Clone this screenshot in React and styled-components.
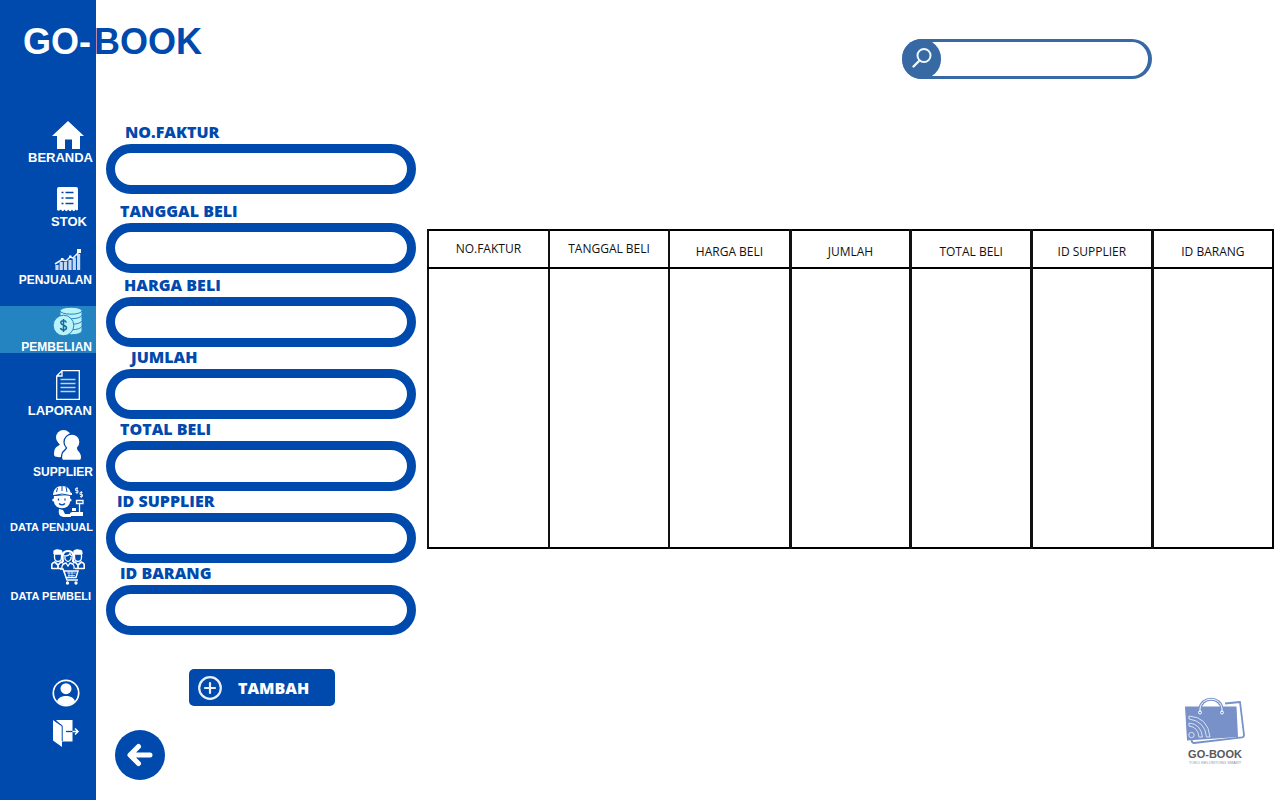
import React from "react";
import styled, { createGlobalStyle } from "styled-components";

const blue = "#004aad";

const GlobalStyle = createGlobalStyle`
  *, *::before, *::after { box-sizing: border-box; }
  body { margin: 0; background: #fff; font-family: "Open Sans", sans-serif; }
`;

const Page = styled.div`
  position: relative;
  display: flex;
  min-height: 100vh;
`;

const Wordmark = styled.h1`
  position: absolute;
  top: 21px;
  left: 23px;
  display: flex;
  gap: 3px;
  margin: 0;
  font: 700 36px/42px "Liberation Sans", sans-serif;
  color: ${blue};
`;

const WordmarkLight = styled.span`
  color: #fff;
`;

const Sidebar = styled.aside`
  flex: 0 0 96px;
  display: flex;
  flex-direction: column;
  padding: 121px 0 52px;
  background: ${blue};
  color: #fff;
`;

const Nav = styled.nav`
  display: flex;
  flex-direction: column;
`;

const NavItem = styled.a`
  display: flex;
  flex-direction: column;
  align-items: flex-end;
  height: ${(p) => p.$height}px;
  margin-top: ${(p) => p.$gap}px;
  overflow: hidden;
  color: #fff;
  text-decoration: none;
  background: ${(p) => (p.$active ? "#2484c2" : "transparent")};
`;

const NavIcon = styled.span`
  flex: 1 0 auto;
  display: flex;
  align-items: flex-start;
  justify-content: center;
  width: 56px;

  svg { display: block; }
`;

const NavLabel = styled.span`
  padding-right: ${(p) => p.$inset}px;
  font: 700 ${(p) => p.$size}px/16px "Liberation Sans", sans-serif;
  white-space: nowrap;
`;

const Account = styled.div`
  display: flex;
  flex-direction: column;
  align-items: center;
  align-self: flex-end;
  gap: 12px;
  width: 60px;
  margin-top: auto;
`;

const IconButton = styled.button`
  display: block;
  padding: 0;
  border: 0;
  background: none;
  color: #fff;
  cursor: pointer;

  svg { display: block; }
`;

const FormColumn = styled.section`
  flex: 0 0 310px;
  display: flex;
  flex-direction: column;
  margin-left: 10px;
  padding: 122px 0 20px;
`;

const Form = styled.form`
  display: flex;
  flex-direction: column;
`;

const Field = styled.div`
  display: flex;
  flex-direction: column;
  margin-bottom: ${(p) => p.$gap}px;
`;

const FieldLabel = styled.label`
  padding-left: ${(p) => p.$indent}px;
  font-size: 16px;
  font-weight: 800;
  line-height: 20px;
  height: 22px;
  color: ${blue};
`;

const FieldInput = styled.input`
  width: 100%;
  height: 50px;
  padding: 0 16px;
  border: 9px solid ${blue};
  border-radius: 25px;
  background: #fff;
  font: 600 16px "Open Sans", sans-serif;
`;

const AddButton = styled.button`
  display: flex;
  align-items: center;
  align-self: flex-start;
  gap: 16px;
  width: 146px;
  height: 37px;
  margin: 34px 0 0 83px;
  padding: 0 9px;
  border: 0;
  border-radius: 5px;
  background: ${blue};
  color: #fff;
  font: 800 16px/20px "Open Sans", sans-serif;
  cursor: pointer;
`;

const BackButton = styled.button`
  display: flex;
  align-items: center;
  justify-content: center;
  width: 50px;
  height: 50px;
  margin: 24px 0 0 9px;
  padding: 0;
  border: 0;
  border-radius: 50%;
  background: ${blue};
  cursor: pointer;
`;

const DataColumn = styled.main`
  flex: 1;
  min-width: 0;
  display: flex;
  flex-direction: column;
  margin-left: 11px;
  padding: 39px 6px 34px 0;
`;

const Search = styled.form`
  display: flex;
  align-items: center;
  align-self: flex-end;
  width: 250px;
  height: 40px;
  margin-right: 122px;
  border: solid #3769a5;
  border-width: 3px 4px 3px 0;
  border-radius: 20px;
`;

const SearchButton = styled.button`
  flex: 0 0 39px;
  height: 40px;
  padding: 0;
  border: 0;
  border-radius: 20px;
  background: #3769a5;
  cursor: pointer;

  svg { display: block; }
`;

const SearchInput = styled.input`
  flex: 1;
  min-width: 0;
  height: 32px;
  padding: 0 8px;
  border: 0;
  border-radius: 0 16px 16px 0;
  background: transparent;
  outline: none;
  font: 14px "Open Sans", sans-serif;
`;

const Table = styled.table`
  width: 100%;
  margin-top: 150px;
  border: 2px solid #000;
  border-collapse: collapse;
  table-layout: fixed;
`;

const HeadCell = styled.th`
  height: 38px;
  padding: ${(p) => (p.$raised ? "0" : "6px 0 0")};
  border-bottom: 2px solid #000;
  border-left: ${(p) => p.$rule}px solid #111;
  font-size: 12px;
  font-weight: 400;
  line-height: 16px;
  color: #111;
  white-space: nowrap;
`;

const BodyCell = styled.td`
  height: 280px;
  padding: 0;
  border-left: ${(p) => p.$rule}px solid #111;
`;

const StoreBadge = styled.footer`
  display: flex;
  flex-direction: column;
  align-items: center;
  align-self: flex-end;
  width: 60px;
  margin: auto 29px 0 0;
`;

const StoreName = styled.strong`
  margin-top: 3px;
  font: 700 11px/12px "Liberation Sans", sans-serif;
  color: #58595b;
  white-space: nowrap;
`;

const StoreTagline = styled.small`
  font: 400 4px/6px "Liberation Sans", sans-serif;
  color: #8794b8;
  white-space: nowrap;
`;

const HomeIcon = () => (
  <svg width="32" height="28" viewBox="0 0 32 28" fill="currentColor">
    <path d="M16 0 32 15h-4v13h-8v-9.500h-7V28H5V15H0z" />
  </svg>
);

const StockIcon = () => (
  <svg width="22" height="25" viewBox="0 0 22 25">
    <path d="M2 0h17Q21 0 21 2v20.500q-1 2-2.500 0-1.700 3.500-3.500 0-1.900 3.500-3.800 0-1.800 3.500-3.700 0-1.800 3.500-3.500 0-2 2-4 .5V2q0-2 2-2z" fill="#fff" />
    <path d="M4.500 5.500h2M4.500 11h2M4.500 16.500h2M8.500 5.500h8M8.500 11h8M8.500 16.500h8" stroke={blue} strokeWidth="1.700" />
  </svg>
);

const SalesIcon = () => (
  <svg width="28" height="22" viewBox="0 0 28 22">
    <path d="M3 21v-5M7.200 21v-8M11.500 21v-8M16 21V11M20.300 21V8.500M24.600 21V5" stroke="#c5d8f2" strokeWidth="3.200" />
    <path d="M1 15 8 10.500l4 1.500 4-4 3 1 6-6" stroke="#f2f7fd" strokeWidth="1.500" fill="none" />
    <path d="M23 0h4v4h-4zM7 9h2.500v2.500H7zM15 6.500h2.500V9H15z" fill="#fff" />
  </svg>
);

const CoinsIcon = () => (
  <svg width="30" height="33" viewBox="0 -1 30 33">
    <g fill="#b9f2f8" stroke="#2484c2" strokeWidth="1">
      <path d="M8 20v4c1 5 20 5 21 0v-5z" />
      <path d="M8 15v4c1 5 20 5 21 0v-5z" />
      <path d="M8 9.500v4c1 5 20 5 21 0v-5z" />
      <path d="M7 4v4c1 5 21 5 22 0V4z" />
      <ellipse cx="18" cy="3.700" rx="11" ry="3.500" />
      <circle cx="10.500" cy="18.500" r="10.300" />
    </g>
    <path d="M13.300 15.500c-.5-2.300-5.500-2.300-5.500.3 0 2.900 5.700 2 5.700 5 0 2.800-5.500 2.700-6 .2M10.500 12v13" fill="none" stroke="#17679e" strokeWidth="1.500" />
  </svg>
);

const ReportIcon = () => (
  <svg width="24" height="30" viewBox="0 0 24 30" fill="none" stroke="#fff">
    <path d="M6 .7h17.300v28.600H.7V6z M.7 6H6V.7" strokeWidth="1.300" />
    <path d="M4.500 9.500h15M4.500 13.500h15M4.500 17.500h15M4.500 21.500h15" stroke="#bdd2ef" strokeWidth="1.400" />
  </svg>
);

const SupplierIcon = () => (
  <svg width="28" height="31" viewBox="0 0 28 31" fill="#fff">
    <circle cx="9.500" cy="7.500" r="7.500" />
    <path d="M4 12c2 2 2.500 3 0 4-3 1.500-4 4-4 8 0 2.500 1.500 3.500 8 3l6-12z" />
    <path d="M12.500 17c1 3-4 2.500-4.800 8-.5 4.500 0 5.500 3 5.500h13.500c3 0 3.800-1 3.300-5-.8-5.500-5.500-5.500-4.500-8.500z" stroke={blue} strokeWidth="1.300" />
    <circle cx="18" cy="12" r="8" stroke={blue} strokeWidth="1.300" />
    <path d="M13.500 16h9l1 5h-11z" />
  </svg>
);

const SellerIcon = () => (
  <svg width="32" height="32" viewBox="0 0 32 32" fill="none">
    <path d="M1 9C1.500 3 5 0 10 0c5.500 0 8 3 8.500 6.500L20 7v2H2z" fill="#fff" />
    <path d="M5.500 2 4.500 6M10 0v5M14 1l1 5" stroke={blue} strokeWidth="1" />
    <path d="M2.500 10v5c0 9 15 9 15 0V9" stroke="#fff" strokeWidth="1.200" fill="#fff" />
    <path d="M2 9.500q8-3 16 0" stroke={blue} strokeWidth="1" />
    <circle cx="1.800" cy="14" r="1.600" fill="#fff" />
    <circle cx="18" cy="14" r="1.600" fill="#fff" />
    <path d="M6.500 12.500v2M13 12.500v2M7 17.500c2 1.800 4 1.800 6 0" stroke={blue} strokeWidth="1.300" />
    <path d="M7 23c-1 6 1 8 6 8h6l-1-3h-5l-2-4z" fill="#fff" />
    <path d="M20 26h11v4H18v-3zM20 22h4v3h-4z" fill="#fff" />
    <path d="M24.500 14.500h6.500v3h-6.500zM27.500 18v8" stroke="#fff" strokeWidth="1.300" />
    <path d="M26 2.500h-2.500v2H26v2h-2.500M25 1v7M30.500 6.500H28v2h2.500v2H28M29.300 5v7" stroke="#dce9fb" strokeWidth="1" />
  </svg>
);

const BuyersIcon = () => (
  <svg width="34" height="36" viewBox="0 0 34 36" fill="none" stroke="#fff" strokeWidth="1.300">
    <path d="M3 5V2q3-2 6-.5Q11 1 11 5M23 5V2q3-2 6-.5 2-.5 2 3.500" fill="#fff" />
    <path d="M3.500 5v3c0 6 7 6 7 0V5zM23.500 5v3c0 6 7 6 7 0V5z" />
    <path d="M.7 20v-4q0-2 3-3l3.300 3 3-3 2 1M33.300 20v-4q0-2-3-3L27 16l-3-3-2 1M1 19.500h9M24 19.500h9M7 15v5M27 15v5" strokeWidth="1.700" />
    <path d="M12 13c-1-7-.5-11 5-11s6 4 5 11" strokeWidth="2.200" />
    <path d="M13 7q5 0 6-2.500Q20 7 21 7" />
    <path d="M14 8v2q3 5 6 0V8M11 20q-1-5 4-6l2 3 2-3q5 1 4 6" />
    <path d="M9 20h3l4 11h11M13 22h14l-2 6.500H15z" strokeWidth="1.500" />
    <path d="M16 24h9M17 26.500h7M18 22v6M21 22v6" strokeWidth=".7" />
    <circle cx="16.500" cy="34" r="1" fill="#fff" />
    <circle cx="25" cy="34" r="1" fill="#fff" />
  </svg>
);

const UserIcon = () => (
  <svg width="28" height="28" viewBox="0 0 28 28">
    <circle cx="14" cy="14" r="12.700" fill="none" stroke="#fff" strokeWidth="1.700" />
    <circle cx="14" cy="9.700" r="5.500" fill="#fff" />
    <path d="M5 22.500c1-4 5-5.500 9-5.500s8 1.500 9 5.500c-5 5-13 5-18 0z" fill="#fff" />
  </svg>
);

const ExitIcon = () => (
  <svg width="28" height="29" viewBox="0 0 28 29">
    <path d="M4 1h16.500v21.500H10V7z" fill="#fff" />
    <path d="M1 1 10 7.500v20.500L1 21.500z" fill="#fff" />
    <path d="M2 1 10.200 6.700V22" fill="none" stroke={blue} />
    <path d="M14 12.500h8" stroke={blue} strokeWidth="1.300" />
    <path d="M20.500 12.500h5M23 9.500l3 3-3 3" fill="none" stroke="#fff" strokeWidth="1.500" />
  </svg>
);

const PlusIcon = () => (
  <svg width="24" height="24" viewBox="0 0 24 24" fill="none" stroke="#e8f0fa" strokeLinecap="round">
    <circle cx="12" cy="12" r="10.800" strokeWidth="2.200" />
    <path d="M12 7v10M7 12h10" strokeWidth="2.200" />
  </svg>
);

const BackIcon = () => (
  <svg width="26" height="24" viewBox="0 0 26 24" fill="none" stroke="#fff" strokeWidth="5" strokeLinecap="round" strokeLinejoin="round">
    <path d="M11.500 3.500 3 12l8.500 8.500M4 12h19" />
  </svg>
);

const SearchIcon = () => (
  <svg width="39" height="40" viewBox="0 0 39 40" fill="none" stroke="#f2f7fc" strokeLinecap="round">
    <circle cx="22" cy="16.500" r="6.500" strokeWidth="2" />
    <path d="m17.500 21.500-6 6" strokeWidth="2.400" />
  </svg>
);

const BagLogo = () => (
  <svg width="60" height="48" viewBox="0 0 60 48" fill="none">
    <path d="M40 6.500 55 5 59 38q0 2-2 2.300L9 46q-2 0-2.500-3" stroke="#7891c8" strokeWidth="1.800" strokeLinejoin="round" />
    <path d="M0 9.500h51.500L53 40 2 43.500z" fill="#7891c8" />
    <path d="M15 16v-4C16-1 36-1 37 12v4" stroke="#7891c8" strokeWidth="3.200" />
    <path d="M15 15v-3C16-1 36-1 37 12v3" stroke="#fff" strokeWidth="1" />
    <circle cx="15" cy="15.500" r="1.500" stroke="#fff" />
    <circle cx="37" cy="15.500" r="1.500" stroke="#fff" />
    <g stroke="#d8e1f3" strokeWidth="1">
      <circle cx="6.500" cy="38" r="2.700" />
      <path d="M4 29q9 1 10 11h3.500Q16 27 4 26zM4 22q16 2 17.500 18H25Q23 20 4 19z" />
    </g>
  </svg>
);

const navItems = [
  { label: "BERANDA", Icon: HomeIcon, height: 45, gap: 0, size: 13, inset: 3 },
  { label: "STOK", Icon: StockIcon, height: 43, gap: 21, size: 13, inset: 9 },
  { label: "PENJUALAN", Icon: SalesIcon, height: 39, gap: 19, size: 12, inset: 4 },
  { label: "PEMBELIAN", Icon: CoinsIcon, height: 47, gap: 18, size: 12, inset: 4, active: true },
  { label: "LAPORAN", Icon: ReportIcon, height: 49, gap: 17, size: 13, inset: 4 },
  { label: "SUPPLIER", Icon: SupplierIcon, height: 50, gap: 11, size: 12, inset: 3 },
  { label: "DATA PENJUAL", Icon: SellerIcon, height: 49, gap: 6, size: 11, inset: 3 },
  { label: "DATA PEMBELI", Icon: BuyersIcon, height: 55, gap: 14, size: 11, inset: 5 },
];

const fields = [
  { id: "faktur", label: "NO.FAKTUR", indent: 19, gap: 7, rule: 2, raised: true },
  { id: "tanggal", label: "TANGGAL BELI", indent: 14, gap: 2, rule: 2, raised: true },
  { id: "harga", label: "HARGA BELI", indent: 18, gap: 0, rule: 2 },
  { id: "jumlah", label: "JUMLAH", indent: 25, gap: 0, rule: 3 },
  { id: "total", label: "TOTAL BELI", indent: 14, gap: 0, rule: 3 },
  { id: "supplier", label: "ID SUPPLIER", indent: 11, gap: 0, rule: 3 },
  { id: "barang", label: "ID BARANG", indent: 14, gap: 0, rule: 3 },
];

export default function App() {
  return (
    <>
      <GlobalStyle />
      <Page>
        <Sidebar>
          <Nav aria-label="Menu">
            {navItems.map(({ label, Icon, height, gap, size, inset, active }) => (
              <NavItem key={label} href="#" $height={height} $gap={gap} $active={active} aria-current={active ? "page" : undefined}>
                <NavIcon><Icon /></NavIcon>
                <NavLabel $size={size} $inset={inset}>{label}</NavLabel>
              </NavItem>
            ))}
          </Nav>
          <Account>
            <IconButton type="button" aria-label="Profil"><UserIcon /></IconButton>
            <IconButton type="button" aria-label="Keluar"><ExitIcon /></IconButton>
          </Account>
        </Sidebar>

        <FormColumn>
          <Form>
            {fields.map(({ id, label, indent, gap }) => (
              <Field key={id} $gap={gap}>
                <FieldLabel htmlFor={id} $indent={indent}>{label}</FieldLabel>
                <FieldInput id={id} type="text" />
              </Field>
            ))}
            <AddButton type="button"><PlusIcon />TAMBAH</AddButton>
          </Form>
          <BackButton type="button" aria-label="Kembali"><BackIcon /></BackButton>
        </FormColumn>

        <DataColumn>
          <Search role="search">
            <SearchButton type="button" aria-label="Cari"><SearchIcon /></SearchButton>
            <SearchInput type="search" aria-label="Cari data" />
          </Search>
          <Table>
            <thead>
              <tr>
                {fields.map(({ id, label, rule, raised }) => (
                  <HeadCell key={id} scope="col" $rule={rule} $raised={raised}>{label}</HeadCell>
                ))}
              </tr>
            </thead>
            <tbody>
              <tr>
                {fields.map(({ id, rule }) => <BodyCell key={id} $rule={rule} />)}
              </tr>
            </tbody>
          </Table>
          <StoreBadge>
            <BagLogo />
            <StoreName>GO-BOOK</StoreName>
            <StoreTagline>TOKO KELONTONG SMART</StoreTagline>
          </StoreBadge>
        </DataColumn>

        <Wordmark><WordmarkLight>GO-</WordmarkLight><span>BOOK</span></Wordmark>
      </Page>
    </>
  );
}
